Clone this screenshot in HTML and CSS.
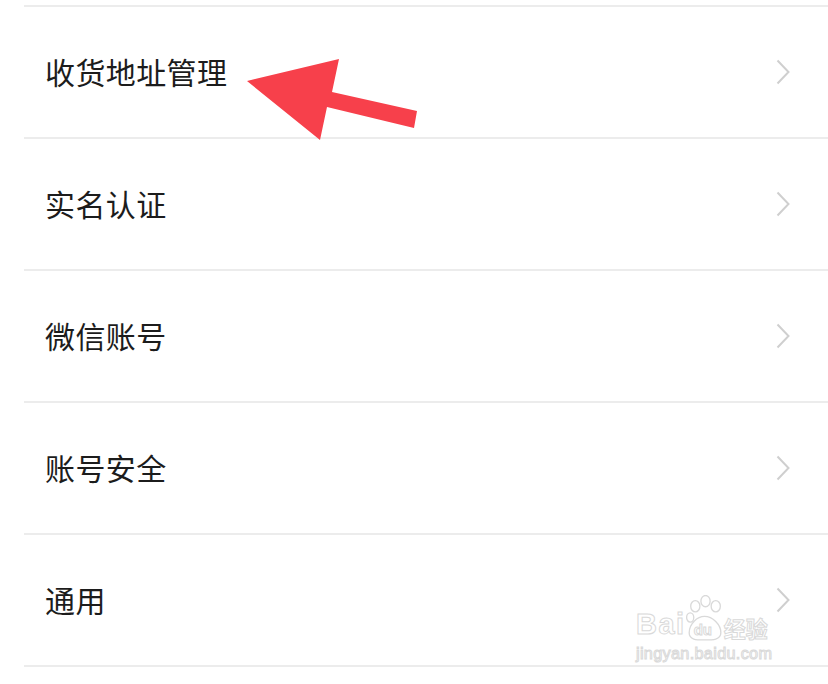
FILE: index.html
```html
<!DOCTYPE html>
<html lang="zh">
<head>
<meta charset="utf-8">
<link rel="stylesheet" href="styles.css">
</head>
<body>
<div class="page">
  <div class="top-gap"></div>
  <ul class="menu">
    <li class="row"><span class="label">收货地址管理</span><svg class="chev" viewBox="0 0 14 26"><path d="M1.5 1.5 L12.5 13 L1.5 24.5"/></svg></li>
    <li class="row"><span class="label">实名认证</span><svg class="chev" viewBox="0 0 14 26"><path d="M1.5 1.5 L12.5 13 L1.5 24.5"/></svg></li>
    <li class="row"><span class="label">微信账号</span><svg class="chev" viewBox="0 0 14 26"><path d="M1.5 1.5 L12.5 13 L1.5 24.5"/></svg></li>
    <li class="row"><span class="label">账号安全</span><svg class="chev" viewBox="0 0 14 26"><path d="M1.5 1.5 L12.5 13 L1.5 24.5"/></svg></li>
    <li class="row"><span class="label">通用</span><svg class="chev" viewBox="0 0 14 26"><path d="M1.5 1.5 L12.5 13 L1.5 24.5"/></svg></li>
    <li class="row end"></li>
  </ul>

  <svg class="arrow" viewBox="0 0 828 684">
    <polygon points="247,81 339,59 332,92 417,111 414,128 327,107 320,140"/>
  </svg>

  <div class="watermark">
    <div class="wm-top">
      <span class="wm-bai">Bai</span>
      <span class="wm-paw">
        <svg viewBox="0 0 36 46">
          <ellipse cx="9" cy="11" rx="4.5" ry="5.5"/>
          <ellipse cx="19" cy="6" rx="4.5" ry="5.5"/>
          <ellipse cx="29" cy="11" rx="4.5" ry="5.5"/>
          <ellipse cx="4" cy="22" rx="3.5" ry="4.5"/>
          <path d="M3 37 C3 28 11 21 18 21 C26 21 34 29 34 37 C34 44 26 44 18 44 C10 44 3 44 3 37 Z"/>
        </svg>
        <span class="wm-du">du</span>
      </span>
      <span class="wm-jy">经验</span>
    </div>
    <div class="wm-url">jingyan.baidu.com</div>
  </div>
</div>
</body>
</html>
```

FILE: styles.css
```css
* { box-sizing: border-box; }
html, body {
  margin: 0;
  padding: 0;
  background: #ffffff;
}
.page {
  position: relative;
  width: 828px;
  height: 684px;
  overflow: hidden;
  font-family: "Noto Sans CJK SC", "Noto Sans", sans-serif;
}
.top-gap { height: 5px; }
.menu {
  list-style: none;
  margin: 0;
  padding: 0 0 0 24px;
}
.row {
  display: flex;
  align-items: center;
  justify-content: space-between;
  height: 132px;
  border-top: 2px solid #ececec;
  padding: 0 38px 0 21px;
}
.row.end { height: 20px; }
.label {
  font-size: 30px;
  color: #1c1c1c;
  letter-spacing: 0.4px;
  line-height: 1;
  margin-top: -2px;
}
.chev {
  width: 14px;
  height: 26px;
  fill: none;
  stroke: #cfcfcf;
  stroke-width: 2;
}
.arrow {
  position: absolute;
  left: 0;
  top: 0;
  width: 828px;
  height: 684px;
  fill: #f7404b;
  pointer-events: none;
}
.watermark {
  position: absolute;
  left: 636px;
  top: 595px;
  width: 145px;
  color: transparent;
  -webkit-text-stroke: 1px #d9d9d9;
  font-family: "Liberation Sans", sans-serif;
}
.wm-top {
  display: flex;
  align-items: flex-end;
  height: 47px;
}
.wm-bai {
  font-size: 29px;
  font-weight: bold;
  line-height: 1;
  letter-spacing: 1.5px;
  margin-bottom: 3px;
}
.wm-paw {
  position: relative;
  width: 37px;
  height: 47px;
}
.wm-paw svg {
  display: block;
  width: 37px;
  height: 47px;
  fill: none;
  stroke: #d9d9d9;
  stroke-width: 1.3;
}
.wm-du {
  position: absolute;
  left: 8px;
  top: 27px;
  font-size: 15px;
  font-weight: bold;
  line-height: 1;
}
.wm-jy {
  font-family: "Noto Sans CJK SC", sans-serif;
  font-size: 22px;
  font-weight: bold;
  line-height: 1;
  margin-bottom: 4px;
  margin-left: 1px;
}
.wm-url {
  font-size: 16.3px;
  line-height: 1;
  margin-top: 3px;
  letter-spacing: 0.3px;
}
```
